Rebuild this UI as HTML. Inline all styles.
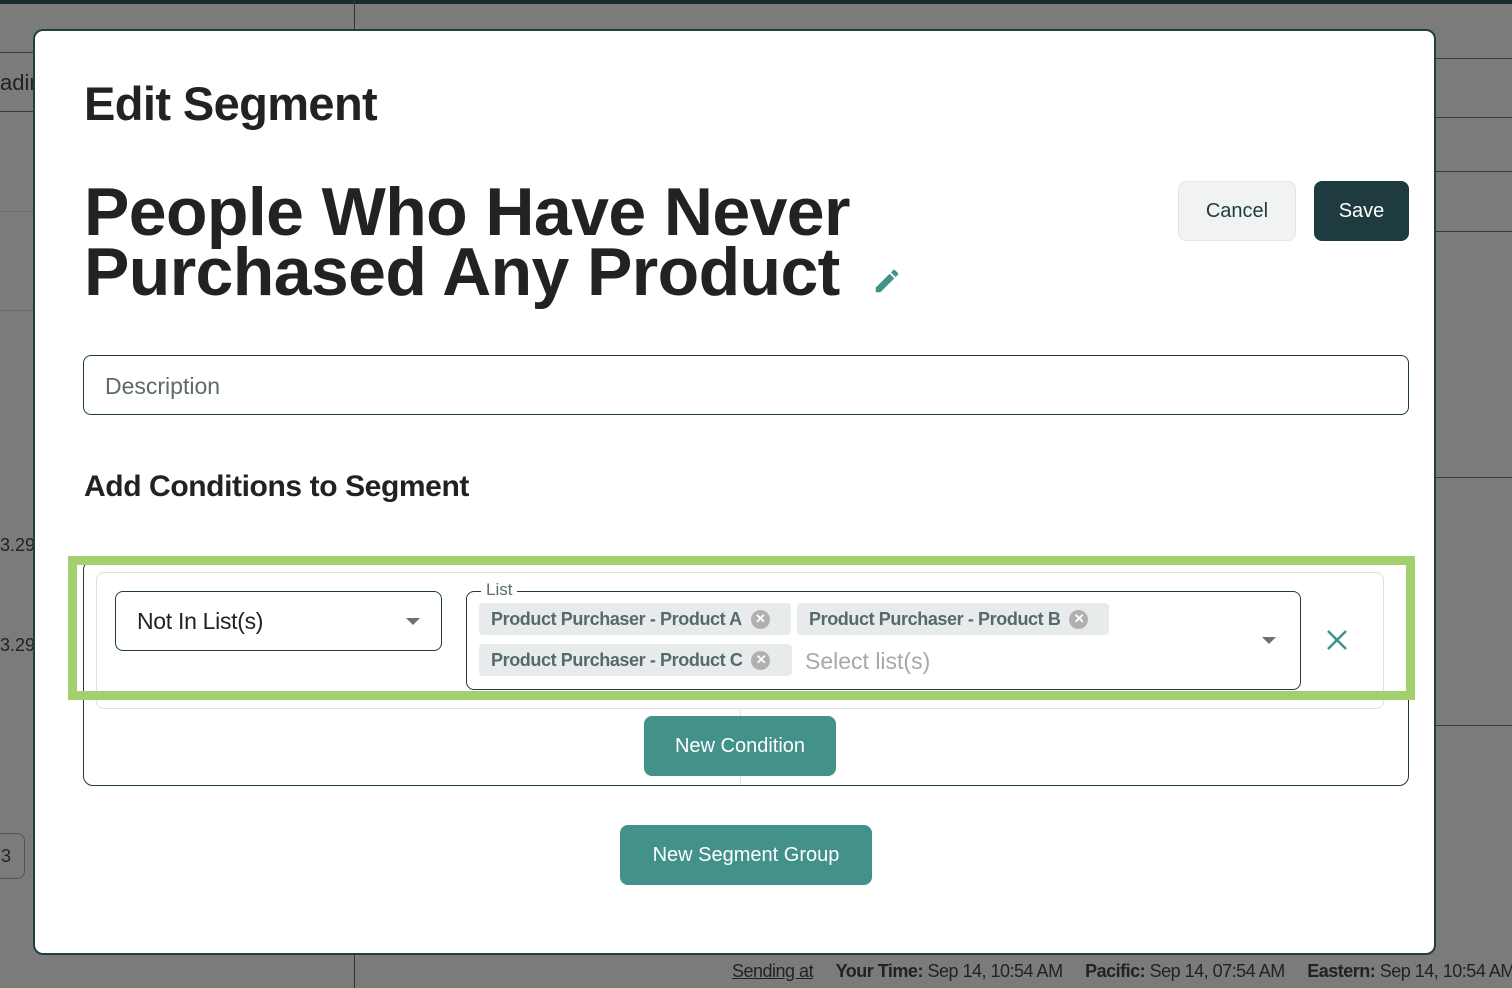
<!DOCTYPE html>
<html><head><style>
*{box-sizing:border-box;margin:0;padding:0}
body{width:1512px;height:988px;background:#7b7b7b;font-family:"Liberation Sans",sans-serif;position:relative;overflow:hidden}
.abs{position:absolute}
.hl{position:absolute;height:1px;background:#3a3a3a}
.modal{position:absolute;left:33px;top:29px;width:1403px;height:926px;background:#fff;border:2px solid #1e4043;border-radius:10px}
.t{position:absolute;color:#222;font-weight:bold}
.btn{position:absolute;border-radius:8px;display:flex;align-items:center;justify-content:center;font-size:20px}
.chip{position:absolute;height:32px;background:#e8ebec;border-radius:4px;color:#566a6a;font-weight:bold;font-size:18px;letter-spacing:-0.4px;display:flex;align-items:center;padding-left:12px}
.cx{width:19px;height:19px;border-radius:50%;background:#b0b0b0;color:#fff;font-size:13px;display:flex;align-items:center;justify-content:center;margin-left:9px;font-weight:bold}
</style></head><body>
<div class="abs" style="left:0;top:0;width:1512px;height:4px;background:#1b2a2c"></div>
<div class="abs" style="left:354px;top:0;width:1px;height:30px;background:#333"></div>
<div class="abs" style="left:354px;top:955px;width:1px;height:33px;background:#333"></div>
<div class="hl" style="left:0;top:52px;width:34px"></div>
<div class="hl" style="left:0;top:111px;width:34px"></div>
<div class="hl" style="left:0;top:211px;width:34px;background:#6a6a6a"></div>
<div class="hl" style="left:0;top:310px;width:34px;background:#6a6a6a"></div>
<div class="hl" style="left:1436px;top:58px;width:76px"></div>
<div class="hl" style="left:1436px;top:117px;width:76px"></div>
<div class="hl" style="left:1436px;top:171px;width:76px"></div>
<div class="hl" style="left:1436px;top:231px;width:76px"></div>
<div class="hl" style="left:1436px;top:477px;width:76px"></div>
<div class="hl" style="left:1436px;top:725px;width:76px"></div>
<div class="abs" style="left:0;top:70px;font-size:22px;color:#222">adir</div>
<div class="abs" style="left:0;top:535px;font-size:18px;color:#222">3.29</div>
<div class="abs" style="left:0;top:635px;font-size:18px;color:#222">3.29</div>
<div class="abs" style="left:-10px;top:833px;width:35px;height:46px;border:1px solid #555;border-radius:8px;font-size:18px;padding:12px 0 0 10px;color:#222">3</div>
<div class="abs" style="left:732px;top:961px;font-size:18px;color:#222;letter-spacing:-0.5px;white-space:nowrap"><u>Sending at</u>&nbsp;&nbsp;&nbsp;&nbsp;&nbsp;<b>Your Time:</b> Sep 14, 10:54 AM&nbsp;&nbsp;&nbsp;&nbsp;&nbsp;<b>Pacific:</b> Sep 14, 07:54 AM&nbsp;&nbsp;&nbsp;&nbsp;&nbsp;<b>Eastern:</b> Sep 14, 10:54 AM</div>

<div class="modal"></div>
<div class="t" style="left:84px;top:76px;font-size:47px;letter-spacing:-0.6px">Edit Segment</div>
<div class="t" style="left:84px;top:182px;font-size:68px;line-height:60px;letter-spacing:-0.6px">People Who Have Never<br>Purchased Any Product</div>
<svg class="abs" style="left:872px;top:266px" width="30" height="30" viewBox="0 0 24 24"><path d="M3 17.25V21h3.75L17.81 9.94l-3.75-3.75L3 17.25zM20.71 7.04a1 1 0 0 0 0-1.41l-2.34-2.34a1 1 0 0 0-1.41 0l-1.83 1.83 3.75 3.75 1.83-1.83z" fill="#43918b"/></svg>
<div class="btn" style="left:1178px;top:181px;width:118px;height:60px;background:#f1f3f3;border:1px solid #e3e6e6;color:#1e3c3e">Cancel</div>
<div class="btn" style="left:1314px;top:181px;width:95px;height:60px;background:#1e3c3f;color:#fff">Save</div>
<div class="abs" style="left:83px;top:355px;width:1326px;height:60px;border:1px solid #1e3c3f;border-radius:8px;font-size:23px;color:#5c6b6b;padding:17px 0 0 21px">Description</div>
<div class="t" style="left:84px;top:470px;font-size:30px;letter-spacing:-0.4px">Add Conditions to Segment</div>

<div class="abs" style="left:83px;top:560px;width:1326px;height:226px;border:1px solid #1e3c3f;border-radius:10px"></div>
<div class="abs" style="left:740px;top:709px;width:1px;height:76px;background:#e5e5e5"></div>
<div class="abs" style="left:96px;top:572px;width:1288px;height:137px;border:1px solid #e0e0e0;border-radius:8px;background:#fff"></div>
<div class="abs" style="left:115px;top:591px;width:327px;height:60px;border:1px solid #1e3c3f;border-radius:8px;font-size:23px;color:#222;padding:16px 0 0 21px;letter-spacing:-0.3px">Not In List(s)</div>
<div class="abs" style="left:406px;top:618px;border-left:7px solid transparent;border-right:7px solid transparent;border-top:7px solid #707070"></div>
<div class="abs" style="left:466px;top:591px;width:835px;height:99px;border:1px solid #1e3c3f;border-radius:8px"></div>
<div class="abs" style="left:481px;top:580px;background:#fff;padding:0 5px;font-size:17px;color:#5c6b6b">List</div>
<div class="chip" style="left:479px;top:603px;width:312px">Product Purchaser - Product A<span class="cx">✕</span></div>
<div class="chip" style="left:797px;top:603px;width:312px">Product Purchaser - Product B<span class="cx">✕</span></div>
<div class="chip" style="left:479px;top:644px;width:313px">Product Purchaser - Product C<span class="cx">✕</span></div>
<div class="abs" style="left:805px;top:648px;font-size:23px;color:#a8a8a8">Select list(s)</div>
<div class="abs" style="left:1262px;top:637px;border-left:7px solid transparent;border-right:7px solid transparent;border-top:7px solid #707070"></div>
<svg class="abs" style="left:1326px;top:629px" width="22" height="22" viewBox="0 0 22 22"><path d="M2 2L20 20M20 2L2 20" stroke="#43918b" stroke-width="2.5"/></svg>
<div class="abs" style="left:68px;top:556px;width:1347px;height:144px;border:9px solid #a3cf6e"></div>

<div class="btn" style="left:644px;top:716px;width:192px;height:60px;background:#43918b;color:#fff">New Condition</div>
<div class="btn" style="left:620px;top:825px;width:252px;height:60px;background:#43918b;color:#fff">New Segment Group</div>
</body></html>
